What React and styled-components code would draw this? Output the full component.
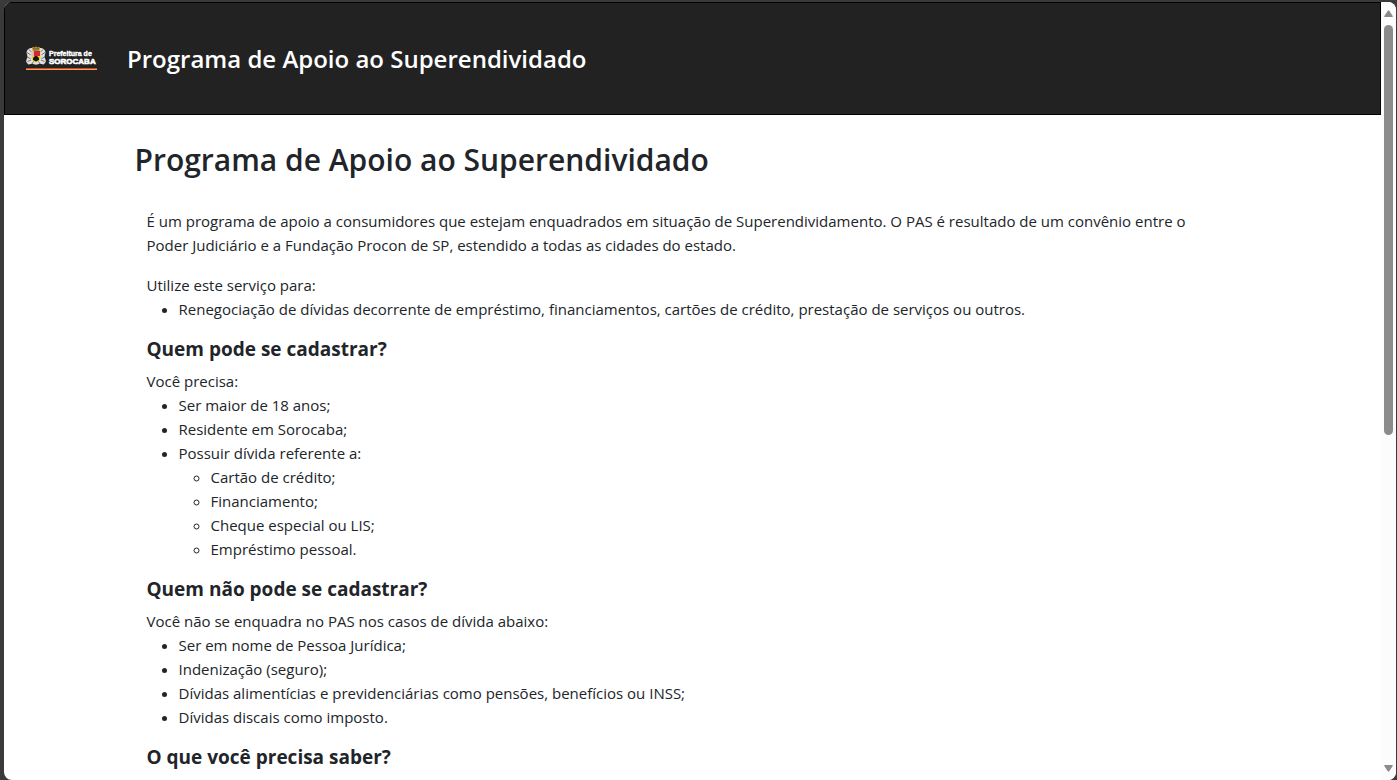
import React from 'react';
import styled, { createGlobalStyle } from 'styled-components';

const GlobalStyle = createGlobalStyle`
  *, *::before, *::after {
    box-sizing: border-box;
  }

  body {
    margin: 0;
    background: #3a3a3a;
    color: #212529;
    font-family: 'Segoe UI', 'Open Sans', 'Noto Sans', sans-serif;
    font-size: 15px;
    line-height: 24px;
  }
`

const Screen = styled.div`
  height: 100vh;
  padding: 2px 1px 0 4px;
`

const Window = styled.div`
  display: flex;
  height: 100%;
  overflow: hidden;
  border-radius: 8px;
  background: #fff;
`

const Page = styled.div`
  flex: 1;
  min-width: 0;
  overflow: hidden;
`

const Header = styled.header`
  display: flex;
  align-items: center;
  gap: 30px;
  padding: 39px 21px;
  border: 1px solid #000;
  background: #222;
`

const LogoLink = styled.a`
  display: block;
  line-height: 0;
`

const Brand = styled.span`
  color: #fff;
  font-size: 24px;
  font-weight: 600;
  line-height: 33px;
`

const Container = styled.main`
  max-width: 1140px;
  margin: 0 auto;
  padding: 26px 12px 0;
`

const Title = styled.h1`
  margin: 0 0 30px;
  font-size: 30px;
  font-weight: 600;
  line-height: 38px;
`

const Content = styled.div`
  padding: 0 24px 0 12px;
`

const Intro = styled.p`
  margin: 0 0 16px;
`

const Subtitle = styled.h2`
  margin: 0 0 8px;
  font-size: 19px;
  font-weight: 700;
  line-height: 24px;
`

const Lead = styled.p`
  margin: 0;
`

const List = styled.ul`
  margin: 0 0 ${props => props.$nested ? '0' : '16px'};
  padding-left: 32px;
  list-style: ${props => props.$nested ? 'circle' : 'disc'};
`

const Scrollbar = styled.div`
  display: flex;
  flex-direction: column;
  align-items: center;
  justify-content: space-between;
  width: 15px;
  padding: 8px 0;
  background: #fcfcfc;
`

const Track = styled.div`
  flex: 1;
  width: 9px;
  margin: 8px 0;
`

const Thumb = styled.div`
  height: 56%;
  border-radius: 5px;
  background: #8b8b8b;
`

const Arrow = ({ down }) => (
  <svg width="9" height="7" viewBox="0 0 9 7" aria-hidden="true">
    <path
      d={down ? 'M.8 0h7.4q1 0 .5 1L5.2 6.3q-.7.9-1.4 0L.3 1Q-.2 0 .8 0z' : 'M.8 7h7.4q1 0 .5-1L5.2.7q-.7-.9-1.4 0L.3 6q-.5 1 .5 1z'}
      fill="#8b8b8b"
    />
  </svg>
)

const Logo = () => (
  <svg width="71" height="25" viewBox="0 0 71 25" role="img" aria-label="Prefeitura de Sorocaba">
    {/* plumes */}
    <path d="M5 2Q1 2.500 .5 6.500L1.500 10.500 0 15.500l2.200 2.900 3.800-.6 4 1 4-1 3.800.6 2.200-2.900-1.500-5 1-4Q19 2.500 15 2z" fill="#e0e0e0" />
    <path d="M1 6.500l3.500 2.300M1 11l3.500 1.500M1.500 15.500l3.500-1.500M19 6.500l-3.500 2.300M19 11l-3.500 1.500M18.500 15.500L15 14M3 3.500l2.500 2.500M17 3.500L14.500 6M6 18l1.500-2.500M14 18l-1.500-2.500" stroke="#555" strokeWidth=".8" />
    {/* crown */}
    <path d="M6 1.500L7.500.8l1 .7L10 .2l1.500 1.300 1-.7 1.500.7-.7 3.500H6.800z" fill="#a98d2b" />
    <path d="M7 2.800h6" stroke="#68591d" strokeWidth=".8" />
    {/* shield */}
    <path d="M5.500 5h9v6q0 4-4.500 5.500Q5.500 15 5.500 11z" fill="#f4cf25" />
    <path d="M6 5h8v5H6z" fill="#cf2733" />
    <path d="M5.500 5H8v5H5.500z" fill="#edb3a6" />
    <path d="M7 14v-2l2-2h2l2 2v2l-3 1.500z" fill="#151515" />
    <text x="23" y="10" fill="#fff" stroke="#fff" strokeWidth=".4" fontFamily="Liberation Sans, Arial, sans-serif" fontSize="7" fontWeight="700">Prefeitura de</text>
    <text x="23" y="18" fill="#fff" stroke="#fff" strokeWidth=".6" fontFamily="Liberation Sans, Arial, sans-serif" fontSize="8" fontWeight="700">SOROCABA</text>
    <path d="M0 22h71v1H0z" fill="#dc4030" />
    <path d="M0 23h71v1H0z" fill="#e9a94d" />
  </svg>
)

const App = () => (
  <Screen>
    <GlobalStyle />
    <Window>
      <Page>
        <Header>
          <LogoLink href="#">
            <Logo />
          </LogoLink>
          <Brand>Programa de Apoio ao Superendividado</Brand>
        </Header>
        <Container>
          <Title>Programa de Apoio ao Superendividado</Title>
          <Content>
            <Intro>
              É um programa de apoio a consumidores que estejam enquadrados em situação de Superendividamento. O PAS é resultado de um convênio entre o Poder Judiciário e a Fundação Procon de SP, estendido a todas as cidades do estado.
            </Intro>
            <Lead>Utilize este serviço para:</Lead>
            <List>
              <li>Renegociação de dívidas decorrente de empréstimo, financiamentos, cartões de crédito, prestação de serviços ou outros.</li>
            </List>

            <Subtitle>Quem pode se cadastrar?</Subtitle>
            <Lead>Você precisa:</Lead>
            <List>
              <li>Ser maior de 18 anos;</li>
              <li>Residente em Sorocaba;</li>
              <li>
                Possuir dívida referente a:
                <List $nested>
                  <li>Cartão de crédito;</li>
                  <li>Financiamento;</li>
                  <li>Cheque especial ou LIS;</li>
                  <li>Empréstimo pessoal.</li>
                </List>
              </li>
            </List>

            <Subtitle>Quem não pode se cadastrar?</Subtitle>
            <Lead>Você não se enquadra no PAS nos casos de dívida abaixo:</Lead>
            <List>
              <li>Ser em nome de Pessoa Jurídica;</li>
              <li>Indenização (seguro);</li>
              <li>Dívidas alimentícias e previdenciárias como pensões, benefícios ou INSS;</li>
              <li>Dívidas discais como imposto.</li>
            </List>

            <Subtitle>O que você precisa saber?</Subtitle>
          </Content>
        </Container>
      </Page>
      <Scrollbar aria-hidden="true">
        <Arrow />
        <Track>
          <Thumb />
        </Track>
        <Arrow down />
      </Scrollbar>
    </Window>
  </Screen>
)

export default App;
